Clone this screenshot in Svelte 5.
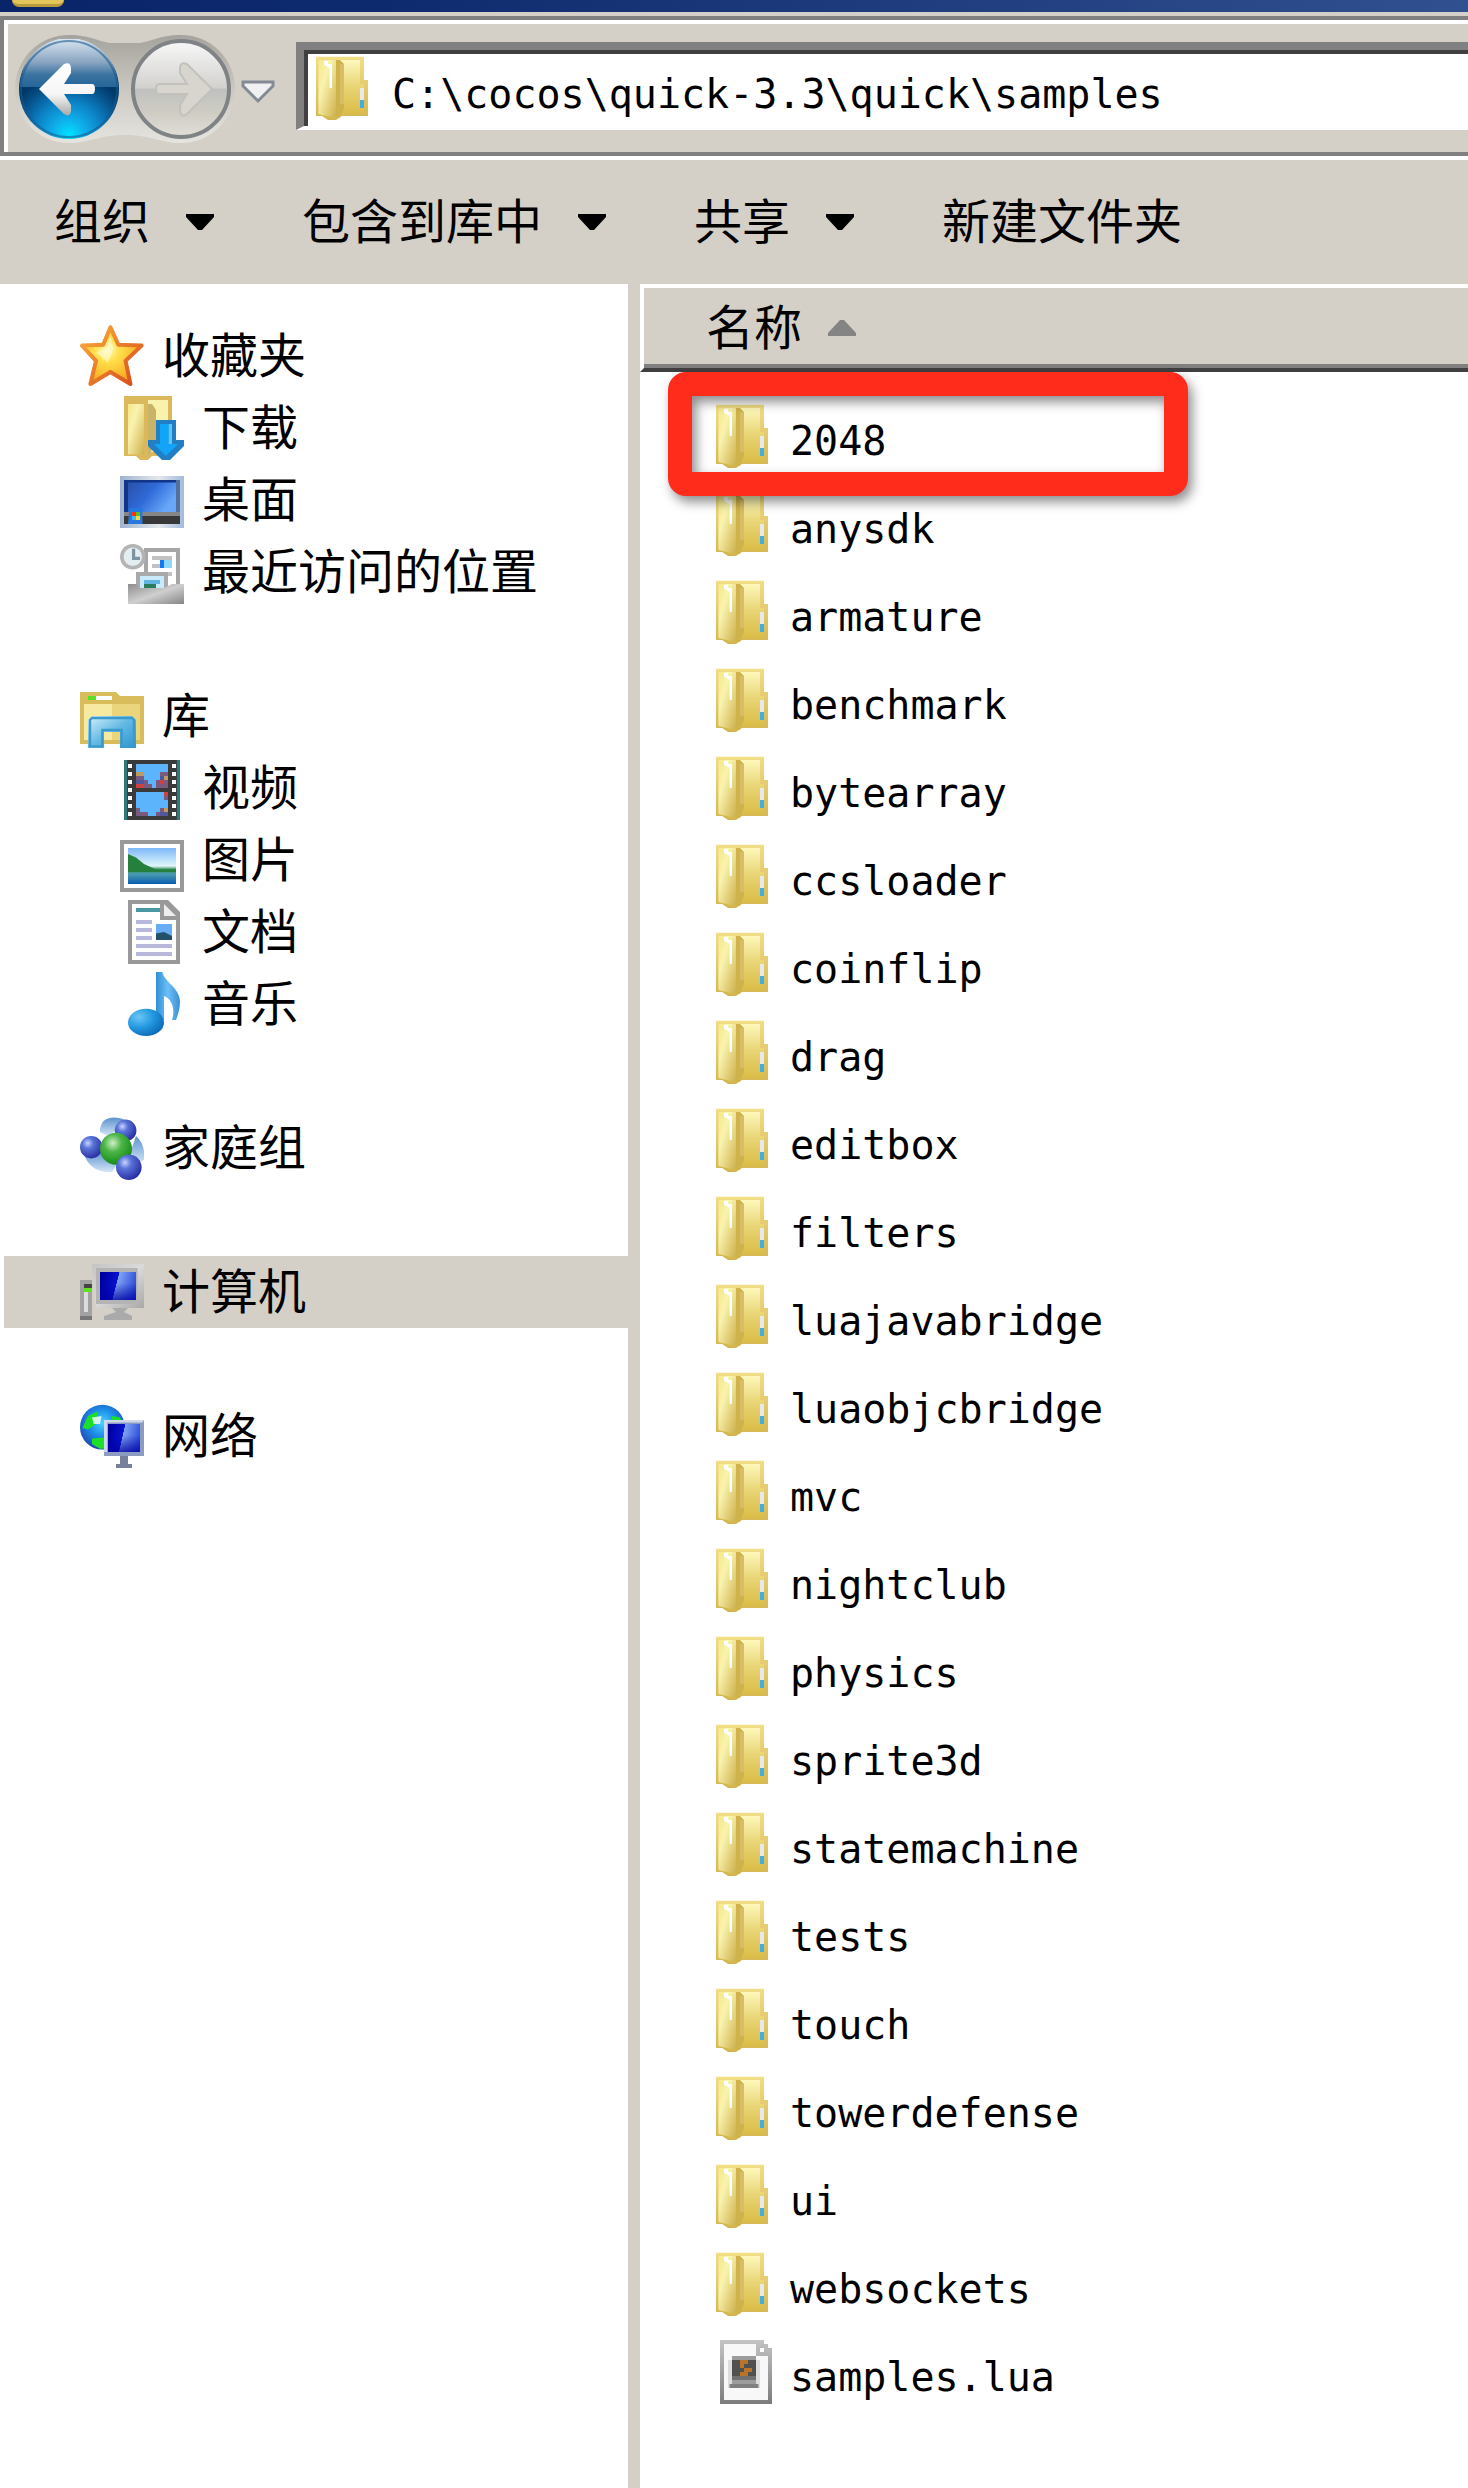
<script lang="ts">
  type IconName =
    | 'star' | 'download' | 'desktop' | 'recent' | 'library' | 'video'
    | 'picture' | 'document' | 'music' | 'homegroup' | 'computer'
    | 'network' | 'folder' | 'script';

  interface Place {
    label: string;
    icon: IconName;
    children?: Place[];
  }

  const groups: Place[] = [
    {
      label: '收藏夹',
      icon: 'star',
      children: [
        { label: '下载', icon: 'download' },
        { label: '桌面', icon: 'desktop' },
        { label: '最近访问的位置', icon: 'recent' }
      ]
    },
    {
      label: '库',
      icon: 'library',
      children: [
        { label: '视频', icon: 'video' },
        { label: '图片', icon: 'picture' },
        { label: '文档', icon: 'document' },
        { label: '音乐', icon: 'music' }
      ]
    },
    { label: '家庭组', icon: 'homegroup' },
    { label: '计算机', icon: 'computer' },
    { label: '网络', icon: 'network' }
  ];

  const commands = [
    { label: '组织', menu: true },
    { label: '包含到库中', menu: true },
    { label: '共享', menu: true },
    { label: '新建文件夹', menu: false }
  ];

  const folders = [
    '2048', 'anysdk', 'armature', 'benchmark', 'bytearray', 'ccsloader',
    'coinflip', 'drag', 'editbox', 'filters', 'luajavabridge',
    'luaobjcbridge', 'mvc', 'nightclub', 'physics', 'sprite3d',
    'statemachine', 'tests', 'touch', 'towerdefense', 'ui', 'websockets'
  ];

  const files: { name: string; icon: IconName }[] = [
    ...folders.map((name) => ({ name, icon: 'folder' as IconName })),
    { name: 'samples.lua', icon: 'script' }
  ];

  let path = $state('C:\\cocos\\quick-3.3\\quick\\samples');
  let selected = $state('计算机');
  let marked = $state('2048');
</script>

<!-- gradients shared by all the icons below -->
<svg class="defs" aria-hidden="true">
  <defs>
    <linearGradient id="g-flap" x1="0" y1="0" x2="1" y2="1">
      <stop offset="0" stop-color="#f5e88a" />
      <stop offset="0.35" stop-color="#f9f3ae" />
      <stop offset="1" stop-color="#cdb14c" />
    </linearGradient>
    <linearGradient id="g-back" x1="0" y1="0" x2="0" y2="1">
      <stop offset="0" stop-color="#fdf8bd" />
      <stop offset="0.5" stop-color="#e8d473" />
      <stop offset="1" stop-color="#dbbc48" />
    </linearGradient>
    <linearGradient id="g-edge" x1="0" y1="0" x2="0" y2="1">
      <stop offset="0" stop-color="#f1de86" />
      <stop offset="1" stop-color="#d3b64e" />
    </linearGradient>
    <radialGradient id="g-star" cx="0.42" cy="0.4" r="0.6">
      <stop offset="0" stop-color="#fffcc0" />
      <stop offset="0.35" stop-color="#ffe04a" />
      <stop offset="1" stop-color="#f9a51c" />
    </radialGradient>
    <linearGradient id="g-star-edge" x1="0" y1="0" x2="1" y2="1">
      <stop offset="0" stop-color="#fbb03b" />
      <stop offset="1" stop-color="#d8481c" />
    </linearGradient>
    <linearGradient id="g-desk" x1="0" y1="0" x2="1" y2="0.5">
      <stop offset="0" stop-color="#2a50a8" />
      <stop offset="0.5" stop-color="#2f6ad8" />
      <stop offset="1" stop-color="#69a8f8" />
    </linearGradient>
    <linearGradient id="g-frame" x1="0" y1="0" x2="1" y2="0">
      <stop offset="0" stop-color="#9fb3cf" />
      <stop offset="0.6" stop-color="#e4e8ec" />
      <stop offset="1" stop-color="#a3bbdc" />
    </linearGradient>
    <linearGradient id="g-tray" x1="0" y1="0" x2="1" y2="1">
      <stop offset="0" stop-color="#8c8c8c" />
      <stop offset="0.5" stop-color="#cfcfcf" />
      <stop offset="1" stop-color="#858585" />
    </linearGradient>
    <linearGradient id="g-glass" x1="0" y1="0" x2="1" y2="1">
      <stop offset="0" stop-color="#d8f1fb" />
      <stop offset="0.5" stop-color="#62b9e4" />
      <stop offset="1" stop-color="#2f95cf" />
    </linearGradient>
    <linearGradient id="g-photo" x1="0" y1="0" x2="0" y2="1">
      <stop offset="0" stop-color="#7cb8f8" />
      <stop offset="0.5" stop-color="#e0f6fa" />
      <stop offset="0.6" stop-color="#2c8a55" />
      <stop offset="0.72" stop-color="#4a9cb0" />
      <stop offset="1" stop-color="#0a5cb0" />
    </linearGradient>
    <linearGradient id="g-note" x1="0" y1="0" x2="1" y2="0">
      <stop offset="0" stop-color="#2f8fd4" />
      <stop offset="0.5" stop-color="#6cc0fa" />
      <stop offset="1" stop-color="#3a8fd0" />
    </linearGradient>
    <radialGradient id="g-notehead" cx="0.3" cy="0.3" r="0.8">
      <stop offset="0" stop-color="#6cc6f4" />
      <stop offset="0.5" stop-color="#2398e0" />
      <stop offset="1" stop-color="#0a66b4" />
    </radialGradient>
    <radialGradient id="g-ball-blue" cx="0.35" cy="0.32" r="0.7">
      <stop offset="0" stop-color="#c8d4ff" />
      <stop offset="0.35" stop-color="#5a74d8" />
      <stop offset="1" stop-color="#2a2fa4" />
    </radialGradient>
    <radialGradient id="g-ball-green" cx="0.4" cy="0.32" r="0.7">
      <stop offset="0" stop-color="#d0f0c4" />
      <stop offset="0.4" stop-color="#4db548" />
      <stop offset="1" stop-color="#128a12" />
    </radialGradient>
    <linearGradient id="g-halo" x1="0" y1="0" x2="0" y2="1">
      <stop offset="0" stop-color="#5d93cf" />
      <stop offset="1" stop-color="#d6e6f6" />
    </linearGradient>
    <linearGradient id="g-screen" x1="0" y1="0.4" x2="1" y2="0.6">
      <stop offset="0" stop-color="#0000a0" />
      <stop offset="0.44" stop-color="#0812d0" />
      <stop offset="0.45" stop-color="#7fa4f4" />
      <stop offset="1" stop-color="#2a48d8" />
    </linearGradient>
    <linearGradient id="g-shade" x1="0" y1="0" x2="0" y2="1">
      <stop offset="0" stop-color="#0000a0" stop-opacity="0" />
      <stop offset="0.4" stop-color="#0000a0" stop-opacity="0" />
      <stop offset="1" stop-color="#0000a0" stop-opacity="0.75" />
    </linearGradient>
    <linearGradient id="g-bezel" x1="0" y1="0" x2="1" y2="1">
      <stop offset="0" stop-color="#c4c4c4" />
      <stop offset="0.5" stop-color="#dadada" />
      <stop offset="1" stop-color="#a8a8a8" />
    </linearGradient>
    <radialGradient id="g-globe" cx="0.5" cy="0.4" r="0.6">
      <stop offset="0" stop-color="#48d4ff" />
      <stop offset="0.5" stop-color="#1c8ce8" />
      <stop offset="1" stop-color="#2048b0" />
    </radialGradient>
    <linearGradient id="g-page" x1="0" y1="0" x2="0" y2="1">
      <stop offset="0" stop-color="#c4c4c4" />
      <stop offset="1" stop-color="#7c7c7c" />
    </linearGradient>
    <linearGradient id="g-pod" x1="0" y1="0" x2="0" y2="1">
      <stop offset="0" stop-color="#a5a39d" />
      <stop offset="0.5" stop-color="#cbc8c1" />
      <stop offset="1" stop-color="#e6e4df" />
    </linearGradient>
    <linearGradient id="g-gloss" x1="0" y1="0" x2="0" y2="1">
      <stop offset="0" stop-color="#dce8f4" />
      <stop offset="0.5" stop-color="#88a4c0" />
      <stop offset="0.75" stop-color="#3b73a0" />
      <stop offset="1" stop-color="#26669a" />
    </linearGradient>
    <radialGradient id="g-lens" cx="0.5" cy="0.96" r="0.62">
      <stop offset="0" stop-color="#00e4ff" />
      <stop offset="0.25" stop-color="#0fb0ec" />
      <stop offset="0.55" stop-color="#0c80c4" />
      <stop offset="0.85" stop-color="#064c84" />
      <stop offset="1" stop-color="#003868" />
    </radialGradient>
    <linearGradient id="g-off" x1="0" y1="0" x2="0" y2="1">
      <stop offset="0" stop-color="#f8f8f8" />
      <stop offset="0.49" stop-color="#d2d1ce" />
      <stop offset="0.5" stop-color="#bfc1bf" />
      <stop offset="0.75" stop-color="#cfccc4" />
      <stop offset="1" stop-color="#e2dfd9" />
    </linearGradient>
    <linearGradient id="g-arrow" x1="0" y1="0" x2="0" y2="1">
      <stop offset="0" stop-color="#ffffff" />
      <stop offset="0.6" stop-color="#f6f6f6" />
      <stop offset="1" stop-color="#a8a8a8" />
    </linearGradient>
  </defs>
</svg>

{#snippet icon(name: IconName)}
  <svg class="icon" viewBox="0 0 16 16" aria-hidden="true">
    {#if name === 'folder'}
      <path d="M1 .2H13V6H14V15H7.5L6 16H4L2.5 15H1Z" fill="url(#g-edge)" />
      <path d="M7 1H12V7H13V14.5H7Z" fill="url(#g-back)" />
      <path d="M1.6 1H6V15.2H4.5L1.6 14.5Z" fill="url(#g-flap)" />
      <path d="M6 1H7L8 2V13L7 15.4H6Z" fill="#ceb24c" />
      <path d="M7 2H8V12H7Z" fill="#d8bd66" />
      <path d="M3 1.2H4V2H5V8H4.4V3L3 2.2Z" fill="#fff" />
      <path d="M12 8H13V11H12Z" fill="#e9e9e9" />
      <path d="M12 11H13V13H12Z" fill="#45addb" />
    {:else if name === 'star'}
      <path
        d="M7.6 .8L9.6 5.2L15.4 5.4L11.4 9.2L12.6 15L7.6 12L2.6 15L4 9.2L.5 5.4L5.8 5.2Z"
        fill="url(#g-star)"
        stroke="url(#g-star-edge)"
        stroke-width="1"
        stroke-linejoin="round"
      />
      <path d="M7.6 3L8.4 6L7 9.6L4 7L6.6 6.2Z" fill="#fffcd8" opacity=".6" />
    {:else if name === 'download'}
      <path d="M1 0H13V15H8L7 16H5L4 15H1Z" fill="#dcb85c" />
      <path d="M2 1H12V14H7V1Z" fill="#f8f2ac" />
      <path d="M2 2H6V14.6H2Z" fill="url(#g-flap)" />
      <path d="M7 2H8L9 3.5V12L7 15Z" fill="#c8b468" />
      <path d="M9 6H14V11H16V12.5L12.5 16H10.5L7 12.5V11H9Z" fill="#227fc4" />
      <path d="M10 7H13V12H14.5L11.5 15L8.5 12H10Z" fill="#12a4f8" />
      <path d="M12.2 7H13V12H12.2Z" fill="#66c4fc" />
    {:else if name === 'desktop'}
      <path d="M0 2H16V15H0Z" fill="url(#g-frame)" />
      <path d="M1 3H15V14H1Z" fill="#12358c" />
      <path d="M2 3.6H14V11H2Z" fill="url(#g-desk)" />
      <path d="M14 3H15V11H14Z" fill="#52709c" />
      <path d="M1 11H15V12H1Z" fill="#868686" />
      <path d="M1 12H15V14H1Z" fill="#383838" />
      <path d="M2.4 10H5.6V14H2Z" fill="#2478e0" />
      <path d="M3 11H4V12H3Z" fill="#ff3010" />
      <path d="M4 11H5V12H4Z" fill="#64c020" />
      <path d="M3 12H4V13H3Z" fill="#40b8ff" />
      <path d="M4 12H5V13H4Z" fill="#ffd838" />
    {:else if name === 'recent'}
      <path d="M6 2H15V12H6Z" fill="#a6a6a6" />
      <path d="M7 3H14V12H7Z" fill="#fff" />
      <path d="M8 4H13V5H8ZM8 6H10V7H8ZM8 8H13V9H8Z" fill="#c2c2c2" />
      <path d="M10 5H11V7H10Z" fill="#1478f0" />
      <path d="M11 5H13V7H11Z" fill="#90d8fc" />
      <circle cx="3.2" cy="4.2" r="3.2" fill="#b4b4b4" />
      <circle cx="3.2" cy="4.2" r="2.3" fill="#e4eef0" />
      <path d="M3.4 2.2V4.6H5" fill="none" stroke="#7c93a4" stroke-width=".8" />
      <path d="M4 8H12V13H4Z" fill="#a9a9a9" />
      <path d="M5 9H11V12H5Z" fill="#c8eafa" />
      <path d="M6 10H10V11H6Z" fill="#64b4e0" />
      <path d="M6 11H9V12H6Z" fill="#2c7c60" />
      <path d="M2 11H4L5 12H11L13 11H16V16H2Z" fill="url(#g-tray)" />
    {:else if name === 'library'}
      <path d="M0 2H9L10 3H16V15H0Z" fill="#d9bd5c" />
      <path d="M1 5H15V14H1Z" fill="#f5eaa0" />
      <path d="M8 5H15V14H8Z" fill="#ead57c" />
      <path d="M4 3H8V4H4Z" fill="#fff" />
      <path d="M2 3H4V4H2Z" fill="#5ae024" />
      <path d="M3 8H13L14 9V16H10V12H6V16H2V9Z" fill="url(#g-glass)" />
      <path d="M3 8.5H13L13.5 9V15.6H10.4V11.5H5.6V15.6H2.5V9Z" fill="none" stroke="#3a9acc" stroke-width=".6" />
    {:else if name === 'video'}
      <path d="M1 1H15V16H1Z" fill="#2f7a7a" />
      <path d="M1.8 1H14.2V16H1.8Z" fill="#3a3a3a" />
      <path
        d="M2.5 2V15.5M13.5 2V15.5"
        stroke="#fff"
        stroke-width="1"
        stroke-dasharray="1 1"
      />
      <path d="M4 2H12V8H4ZM4 9H12V15H4Z" fill="#5cb4fc" />
      <path d="M4 5H6V6H7V7H8V8H4ZM9 7V6H10V4H12V8H9ZM4 13H5V14H7V15H4ZM11 9H12V11H11ZM9 15V14H10V13H12V15Z" fill="#7c5a80" />
      <path d="M4 6H6V7H4ZM10 5H11V6H10ZM10 14H12V15H10Z" fill="#50589c" />
      <path d="M4 7H6V8H4ZM11 9H12V10H11ZM10 6H11V7H10Z" fill="#d04040" />
      <path d="M4 4H6V5H4ZM11 5H12V6H11ZM11 13H12V14H11Z" fill="#c09a60" />
    {:else if name === 'picture'}
      <path d="M0 3H16V16H0Z" fill="#999" />
      <path d="M1 4H15V15H1Z" fill="#fff" />
      <path d="M2 5H14V14H2Z" fill="url(#g-photo)" />
      <path d="M2 6.5L4 7.4L6 9L9 10.4H14V11H2Z" fill="#24803c" />
    {:else if name === 'document'}
      <path d="M2 0H12L15 3V16H2Z" fill="#999" />
      <path d="M3 1H10V5H14V15H3Z" fill="#fff" />
      <path d="M11 1L14 4H11Z" fill="#eee" />
      <path d="M4 2H10V3H4Z" fill="#4a98a4" />
      <path d="M4 5H8V6H4ZM4 7H8V8H4ZM4 9H8V10H4ZM4 11H13V12H4ZM4 13H13V14H4Z" fill="#b8b8dc" />
      <path d="M9 6H13V10H9Z" fill="#6aacf4" />
      <path d="M9 8.4L11 8L13 9V10H9Z" fill="#24506c" />
    {:else if name === 'music'}
      <path d="M9 0H10.6C11 2.4 15 4 15 7.4C15 9.4 14.4 11 14 12H13C14 8.8 12.6 6.6 11 6V12H9Z" fill="url(#g-note)" />
      <ellipse cx="6.5" cy="12.6" rx="4.5" ry="3.4" fill="url(#g-notehead)" />
    {:else if name === 'homegroup'}
      <path d="M5 4Q5 .4 8.6 .4Q11 .4 12.4 2L9 3.6L7 5Z" fill="url(#g-halo)" />
      <path d="M.8 9Q2.4 14.4 8 14L9.4 12L5 9Z" fill="url(#g-halo)" />
      <path d="M14 5Q16.4 7 16 11L14 12L12.6 9Z" fill="url(#g-halo)" />
      <circle cx="11.4" cy="3.6" r="2.7" fill="url(#g-ball-blue)" />
      <circle cx="2.8" cy="7.8" r="2.8" fill="url(#g-ball-blue)" />
      <circle cx="9" cy="8.2" r="4" fill="url(#g-ball-green)" />
      <circle cx="12.2" cy="12.8" r="3.2" fill="url(#g-ball-blue)" />
    {:else if name === 'computer'}
      <path d="M0 5H3V15H0Z" fill="#a2a2a2" />
      <path d="M1 8H2V13H1Z" fill="#dcdcdc" />
      <path d="M1 6H3V7H1Z" fill="#444" />
      <path d="M1 7H3V8H1Z" fill="#5ce41c" />
      <path d="M0 14H3V15H0Z" fill="#777" />
      <path d="M3 1H16V12H4Z" fill="url(#g-bezel)" />
      <path d="M4 2H14.4V11H4Z" fill="#b4b4b4" />
      <path d="M5 3H14V10H5Z" fill="url(#g-screen)" />
      <path d="M5 3H14V10H5Z" fill="url(#g-shade)" />
      <path d="M8 12H12L11 13L13 14V15H6V14L9 13Z" fill="#aaa" />
    {:else if name === 'network'}
      <circle cx="5.6" cy="5.8" r="5.6" fill="url(#g-globe)" />
      <path d="M2 3L4.4 1.8L4 5L2 6.4L.6 6ZM3 8.6L6 8.4L7 11.2H5L3 10ZM8 3L10 3.4L10.6 5H8Z" fill="#1ce028" />
      <path d="M3 3.4L5.4 3L5 5H3.4Z" fill="#fff" opacity=".8" />
      <path d="M6 4H16V13H6Z" fill="#8c9cc0" />
      <path d="M6 4H16L15.6 4.6H6.8V12H6Z" fill="#d0d8ec" />
      <path d="M7 5H15V12H7Z" fill="url(#g-screen)" />
      <path d="M7 5H15V12H7Z" fill="url(#g-shade)" />
      <path d="M10 13H12V15H13V16H9V15H10Z" fill="#76809c" />
    {:else if name === 'script'}
      <path d="M2 0H13V1H14V2H15V16H2Z" fill="url(#g-page)" />
      <path d="M3 1H11V4H14V15H3Z" fill="#f8f8f8" />
      <path d="M12 2H13V3H12Z" fill="#fff" />
      <path d="M4 5H12V12H4Z" fill="#ddd" />
      <path d="M5 4H11V12H5Z" fill="#9c9c9c" />
      <path d="M5 5H11V9H5Z" fill="#505050" />
      <path d="M5 9H11V10H5Z" fill="#707070" />
      <path d="M4.4 11H11.6V12H4.4Z" fill="#808080" />
      <path d="M7 5H9V6H8V7H10V8H9V9H7V8H8V7H7Z" fill="#b87428" />
    {/if}
  </svg>
{/snippet}

{#snippet place(item: Place, nested: boolean)}
  <a
    href="#{item.label}"
    class="place"
    class:nested
    class:selected={selected === item.label}
    onclick={() => (selected = item.label)}
  >
    {@render icon(item.icon)}
    <span>{item.label}</span>
  </a>
{/snippet}

<div class="window">
  <div class="titlebar">
    <span class="title-tab"></span>
  </div>

  <div class="navbar">
    <div class="travel">
      <svg class="pod" viewBox="0 0 220 108" aria-hidden="true">
        <path
          d="M54 0C76 0 86 8 98 8H122C134 8 144 0 166 0A54 54 0 0 1 166 108C146 108 136 100 110 100S74 108 54 108A54 54 0 0 1 54 0Z"
          fill="url(#g-pod)"
        />
      </svg>
      <button class="round" aria-label="后退">
        <svg viewBox="0 0 100 100">
          <circle cx="50" cy="50" r="50" fill="url(#g-lens)" />
          <path d="M1 48A49 49 0 0 1 99 48Z" fill="url(#g-gloss)" />
          <circle cx="50" cy="50" r="48" fill="none" stroke="#1d5a8c" stroke-width="2" opacity=".6" />
          <path
            d="M20 50L45 25Q52 22 52 30V34L45 45H73Q76 45 76 50T73 55H45L52 66V72Q51 79 45 75Z"
            fill="url(#g-arrow)"
          />
        </svg>
      </button>
      <button class="round" aria-label="前进">
        <svg viewBox="0 0 100 100">
          <circle cx="50" cy="50" r="48" fill="url(#g-off)" stroke="#7f8386" stroke-width="4" />
          <path
            d="M81 50L56 25Q49 22 49 30V34L56 45H28Q25 45 25 50T28 55H56L49 66V72Q50 79 56 75Z"
            fill="#d8d5cf"
            stroke="#c3c1bc"
            stroke-width="2"
          />
        </svg>
      </button>
    </div>
    <button class="history" aria-label="最近的位置">
      <svg viewBox="0 0 36 24">
        <path d="M3 2H33V6L18 21L3 6Z" fill="#f0f0f2" stroke="#838a94" stroke-width="3" />
      </svg>
    </button>
    <label class="address">
      {@render icon('folder')}
      <input type="text" aria-label="地址" spellcheck="false" bind:value={path} />
    </label>
  </div>

  <div class="toolbar">
    {#each commands as command (command.label)}
      <button class="command">
        {command.label}
        {#if command.menu}
          <svg class="caret" viewBox="0 0 28 16" aria-hidden="true">
            <path d="M0 0H28V3L16 16H12L0 3Z" fill="#000" />
          </svg>
        {/if}
      </button>
    {/each}
  </div>

  <div class="panes">
    <nav class="sidebar">
      {#each groups as group (group.label)}
        <div class="group">
          {@render place(group, false)}
          {#each group.children ?? [] as child (child.label)}
            {@render place(child, true)}
          {/each}
        </div>
      {/each}
    </nav>

    <main class="content">
      <button class="column">
        名称
        <svg class="caret" viewBox="0 0 28 16" aria-hidden="true">
          <path d="M12 0H16L28 13V16H0V13Z" fill="#848484" />
        </svg>
      </button>
      <ul class="files">
        {#each files as file (file.name)}
          <li>
            <a href="#{file.name}" class="file">
              {@render icon(file.icon)}
              <span>{file.name}</span>
            </a>
            {#if file.name === marked}
              <span class="marker"></span>
            {/if}
          </li>
        {/each}
      </ul>
    </main>
  </div>
</div>

<style>
  :global(body) {
    margin: 0;
    background: #fff;
  }

  .window {
    display: flex;
    flex-direction: column;
    min-height: 100vh;
    overflow: hidden;
    background: #d4d0c8;
    color: #000;
    font-family: 'DejaVu Sans Mono', 'Noto Sans CJK SC', monospace;
    font-size: 48px;
    line-height: 72px;
  }

  .defs {
    position: absolute;
    width: 0;
    height: 0;
  }

  button {
    padding: 0;
    border: 0;
    background: none;
    color: inherit;
    font: inherit;
    cursor: pointer;
  }

  a {
    color: inherit;
    text-decoration: none;
  }

  .icon {
    flex: none;
    display: block;
    width: 64px;
    height: 64px;
  }

  .caret {
    flex: none;
    width: 28px;
    height: 16px;
  }

  /* title bar and address row */
  .titlebar {
    height: 12px;
    margin-bottom: 4px;
    padding-left: 12px;
    background: linear-gradient(to right, #0a246a 0%, #0e2a6e 25%, #31508f 100%);
  }

  .title-tab {
    display: block;
    width: 52px;
    height: 4px;
    border-radius: 0 0 20px 20px;
    border-bottom: 3px solid #b99a3c;
    background: #e2c65c;
  }

  .navbar {
    display: flex;
    align-items: center;
    height: 132px;
    padding-left: 15px;
    border: 4px solid #808080;
    border-right: 0;
    box-shadow: inset 4px 4px #fff;
  }

  .travel {
    position: relative;
    display: flex;
    gap: 12px;
    margin-top: 6px;
  }

  .pod {
    position: absolute;
    top: -4px;
    left: -4px;
    width: 220px;
    height: 108px;
  }

  .round {
    position: relative;
    width: 100px;
    height: 100px;
  }

  .round svg,
  .history svg {
    display: block;
  }

  .history {
    width: 36px;
    height: 24px;
    margin: 12px 20px 0 9px;
  }

  .address {
    flex: 1;
    display: flex;
    align-items: center;
    gap: 16px;
    height: 76px;
    padding-left: 8px;
    border: solid #808080;
    border-width: 8px 0 4px 8px;
    border-bottom-color: #fff;
    background: #fff;
    box-shadow: inset 4px 4px #404040;
  }

  .address input {
    flex: 1;
    box-sizing: border-box;
    min-width: 0;
    height: 64px;
    padding: 12px 0 0;
    border: 0;
    outline: none;
    background: transparent;
    color: inherit;
    font-family: inherit;
    font-size: 40px;
  }

  /* command bar */
  .toolbar {
    display: flex;
    align-items: center;
    gap: 88px;
    height: 124px;
    padding: 0 54px;
    border-top: 4px solid #fff;
    white-space: nowrap;
  }

  .command {
    display: flex;
    align-items: center;
    gap: 36px;
  }

  .panes {
    flex: 1;
    display: grid;
    grid-template-columns: 628px 1fr;
    column-gap: 12px;
  }

  /* navigation tree */
  .sidebar {
    display: flex;
    flex-direction: column;
    gap: 72px;
    padding: 36px 0 36px 4px;
    background: #fff;
  }

  .place {
    display: flex;
    align-items: center;
    gap: 18px;
    height: 72px;
    padding-left: 76px;
  }

  .place.nested {
    padding-left: 116px;
  }

  .place.selected {
    background: #d4d0c8;
  }

  /* file list */
  .content {
    min-width: 0;
    background: #fff;
  }

  .column {
    display: flex;
    align-items: center;
    gap: 26px;
    width: 100%;
    height: 88px;
    padding-left: 62px;
    border: solid #fff;
    border-width: 4px 0 4px 4px;
    border-bottom-color: #404040;
    background: #d4d0c8;
    box-shadow: inset 0 -4px #808080;
  }

  .files {
    margin: 0;
    padding: 20px 0;
    list-style: none;
  }

  .files li {
    position: relative;
  }

  .file {
    display: flex;
    align-items: center;
    gap: 14px;
    height: 88px;
    padding-left: 72px;
    font-size: 40px;
  }

  .file span {
    padding-top: 10px;
  }

  .marker {
    position: absolute;
    top: -20px;
    left: 28px;
    z-index: 1;
    width: 472px;
    height: 76px;
    border: 24px solid #ff2c1c;
    border-radius: 18px;
    filter: drop-shadow(4px 6px 6px rgba(0, 0, 0, 0.45));
    pointer-events: none;
  }
</style>
